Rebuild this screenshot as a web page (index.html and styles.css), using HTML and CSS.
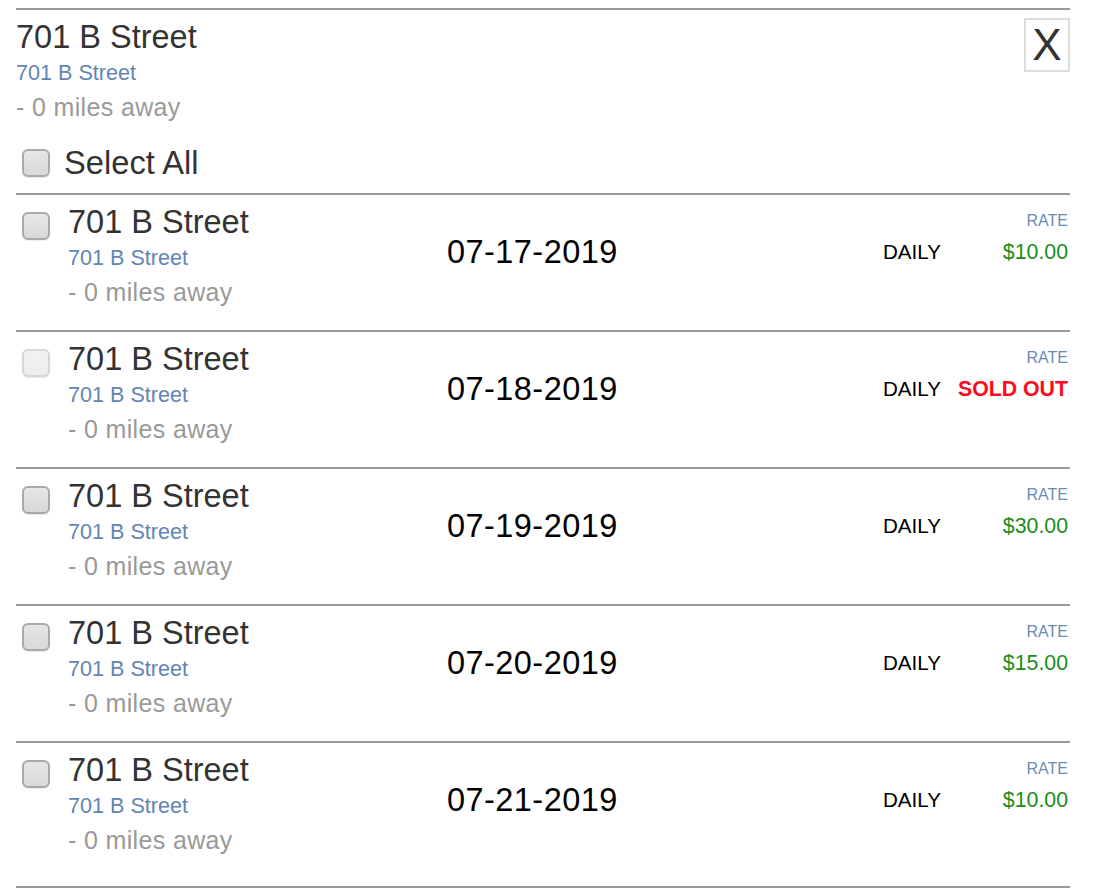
FILE: index.html
```html
<!DOCTYPE html>
<html lang="en">
<head>
<meta charset="utf-8">
<title>701 B Street</title>
<link rel="stylesheet" href="styles.css">
</head>
<body>
<div class="panel">
  <header class="head">
    <div class="head-info">
      <div class="title">701 B Street</div>
      <div class="addr">701 B Street</div>
      <div class="dist">- 0 miles away</div>
      <label class="select-all">
        <input type="checkbox" class="cb">
        <span>Select All</span>
      </label>
    </div>
    <button class="close" type="button">X</button>
  </header>

  <div class="row">
    <div class="c-check"><input type="checkbox" class="cb"></div>
    <div class="c-info">
      <div class="title">701 B Street</div>
      <div class="addr">701 B Street</div>
      <div class="dist">- 0 miles away</div>
    </div>
    <div class="c-date">07-17-2019</div>
    <div class="c-rate">
      <div class="rate-label">RATE</div>
      <div class="rate-line"><span class="period">DAILY</span><span class="price">$10.00</span></div>
    </div>
  </div>

  <div class="row">
    <div class="c-check"><input type="checkbox" class="cb" disabled></div>
    <div class="c-info">
      <div class="title">701 B Street</div>
      <div class="addr">701 B Street</div>
      <div class="dist">- 0 miles away</div>
    </div>
    <div class="c-date">07-18-2019</div>
    <div class="c-rate">
      <div class="rate-label">RATE</div>
      <div class="rate-line"><span class="period">DAILY</span><span class="price sold">SOLD OUT</span></div>
    </div>
  </div>

  <div class="row">
    <div class="c-check"><input type="checkbox" class="cb"></div>
    <div class="c-info">
      <div class="title">701 B Street</div>
      <div class="addr">701 B Street</div>
      <div class="dist">- 0 miles away</div>
    </div>
    <div class="c-date">07-19-2019</div>
    <div class="c-rate">
      <div class="rate-label">RATE</div>
      <div class="rate-line"><span class="period">DAILY</span><span class="price">$30.00</span></div>
    </div>
  </div>

  <div class="row">
    <div class="c-check"><input type="checkbox" class="cb"></div>
    <div class="c-info">
      <div class="title">701 B Street</div>
      <div class="addr">701 B Street</div>
      <div class="dist">- 0 miles away</div>
    </div>
    <div class="c-date">07-20-2019</div>
    <div class="c-rate">
      <div class="rate-label">RATE</div>
      <div class="rate-line"><span class="period">DAILY</span><span class="price">$15.00</span></div>
    </div>
  </div>

  <div class="row last">
    <div class="c-check"><input type="checkbox" class="cb"></div>
    <div class="c-info">
      <div class="title">701 B Street</div>
      <div class="addr">701 B Street</div>
      <div class="dist">- 0 miles away</div>
    </div>
    <div class="c-date">07-21-2019</div>
    <div class="c-rate">
      <div class="rate-label">RATE</div>
      <div class="rate-line"><span class="period">DAILY</span><span class="price">$10.00</span></div>
    </div>
  </div>
</div>
</body>
</html>
```
FILE: styles.css
```css
* { box-sizing: border-box; }

html, body {
  margin: 0;
  padding: 0;
  background: #fff;
}

body {
  font-family: "Liberation Sans", Arial, Helvetica, sans-serif;
  color: #333;
  padding: 8px 36px 0 16px;
}

.panel {
  width: 1054px;
  border-top: 2px solid #999;
}

.head {
  display: flex;
  justify-content: space-between;
  align-items: flex-start;
  padding: 9px 0 12px 0;
  border-bottom: 2px solid #999;
}

.title {
  font-size: 32.5px;
  line-height: 36px;
  color: #333;
}

.addr {
  font-size: 21.6px;
  line-height: 35px;
  color: #6285b5;
}

.dist {
  font-size: 25px;
  letter-spacing: 0.35px;
  line-height: 35px;
  color: #999;
}

.select-all {
  display: flex;
  align-items: center;
  margin-top: 20px;
  height: 36px;
  font-size: 32.7px;
  line-height: 36px;
  color: #333;
}

.select-all .cb {
  margin: 0 14px 0 6px;
}

.cb {
  -webkit-appearance: none;
  appearance: none;
  display: block;
  width: 28px;
  height: 28px;
  margin: 0;
  border: 2px solid #a9a9a9;
  border-radius: 6px;
  background: linear-gradient(#e6e6e6, #d9d9d9);
  box-shadow: 0 1px 1px rgba(0,0,0,0.08);
}

.cb:disabled {
  border-color: #d6d6d6;
  background: linear-gradient(#f2f2f2, #ececec);
}

.close {
  margin-top: -1px;
  width: 46px;
  height: 54px;
  padding: 0;
  border: 2px solid #ddd;
  background: #fff;
  font-family: "Liberation Sans", Arial, sans-serif;
  font-size: 44px;
  line-height: 50px;
  color: #333;
  text-align: center;
}

.row {
  display: grid;
  grid-template-columns: 52px 379px 436px 1fr;
  align-items: start;
  padding: 9px 0 20px 0;
  border-bottom: 2px solid #999;
}

.row.last {
  padding-bottom: 28px;
}

.c-check {
  padding: 8px 0 0 6px;
}

.c-date {
  margin-top: 30px;
  font-size: 32.5px;
  letter-spacing: 0.45px;
  line-height: 36px;
  color: #000;
}

.c-rate {
  padding: 8px 2px 0 0;
}

.rate-label {
  font-size: 16px;
  line-height: 18px;
  color: #6a8bb9;
  text-align: right;
}

.rate-line {
  margin-top: 10px;
  display: flex;
  justify-content: space-between;
  align-items: baseline;
  line-height: 24px;
}

.period {
  font-size: 20.6px;
  color: #000;
}

.price {
  font-size: 21.3px;
  color: #1a8c1a;
}

.price.sold {
  font-weight: bold;
  color: #ff0a1a;
}
```
